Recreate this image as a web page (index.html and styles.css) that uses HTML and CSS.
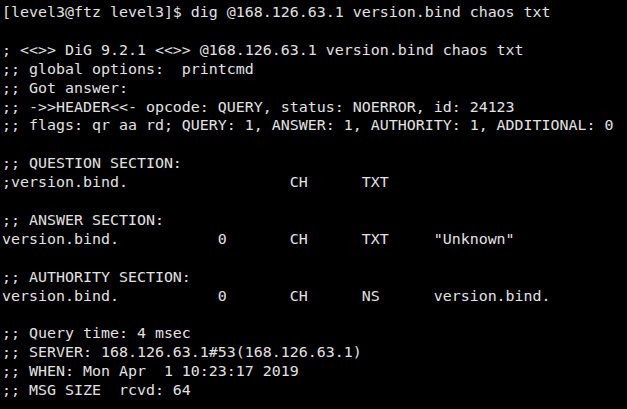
FILE: index.html
```html
<!DOCTYPE html>
<html>
<head>
<meta charset="utf-8">
<link rel="stylesheet" href="styles.css">
</head>
<body>
<pre class="term">[level3@ftz level3]$ dig @168.126.63.1 version.bind chaos txt

; &lt;&lt;&gt;&gt; DiG 9.2.1 &lt;&lt;&gt;&gt; @168.126.63.1 version.bind chaos txt
;; global options:  printcmd
;; Got answer:
;; -&gt;&gt;HEADER&lt;&lt;- opcode: QUERY, status: NOERROR, id: 24123
;; flags: qr aa rd; QUERY: 1, ANSWER: 1, AUTHORITY: 1, ADDITIONAL: 0

;; QUESTION SECTION:
;version.bind.                  CH      TXT

;; ANSWER SECTION:
version.bind.           0       CH      TXT     "Unknown"

;; AUTHORITY SECTION:
version.bind.           0       CH      NS      version.bind.

;; Query time: 4 msec
;; SERVER: 168.126.63.1#53(168.126.63.1)
;; WHEN: Mon Apr  1 10:23:17 2019
;; MSG SIZE  rcvd: 64</pre>
</body>
</html>
```

FILE: styles.css
```css
html, body {
  margin: 0;
  padding: 0;
  background: #000;
  height: 100%;
  overflow: hidden;
}
.term {
  margin: 0;
  padding: 3px 0 0 2px;
  font-family: "DejaVu Sans Mono", "Liberation Mono", monospace;
  font-size: 14.95px;
  line-height: 18.9px;
  color: #e2e2e2;
  white-space: pre;
}
```
